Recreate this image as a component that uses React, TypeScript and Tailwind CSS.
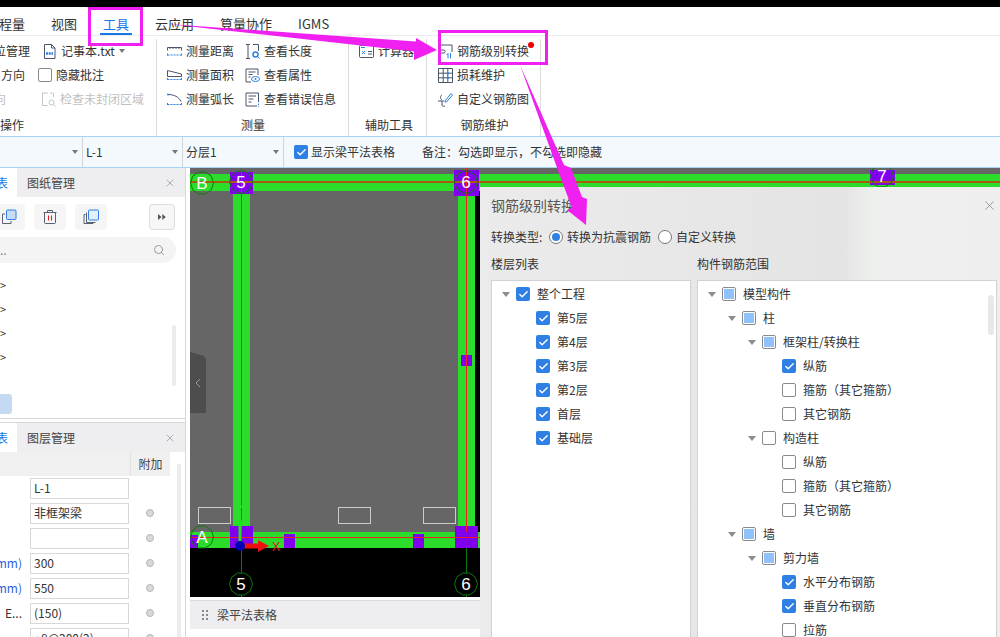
import React from 'react';
import { X, Search, Check } from 'lucide-react';

type CheckState = 'checked' | 'partial' | 'empty';

const Box: React.FC<{ state: CheckState }> = ({ state }) => {
  if (state === 'checked') {
    return (
      <span className="flex h-[14px] w-[14px] shrink-0 items-center justify-center rounded-[2px] bg-[#2f80e4]">
        <Check className="h-[11px] w-[11px] text-white" strokeWidth={3} />
      </span>
    );
  }
  if (state === 'partial') {
    return (
      <span className="flex h-[14px] w-[14px] shrink-0 items-center justify-center rounded-[2px] border border-[#8a8a8a] bg-white">
        <span className="h-[10px] w-[10px] bg-[#8fc1fb]" />
      </span>
    );
  }
  return <span className="h-[14px] w-[14px] shrink-0 rounded-[2px] border border-[#8a8a8a] bg-white" />;
};

type TreeItem = { label: string; level: 0 | 1 | 2 | 3; state: CheckState; arrow?: boolean };

const indent = { 0: 'pl-[4px]', 1: 'pl-[24px]', 2: 'pl-[44px]', 3: 'pl-[64px]' };

const TreeRow: React.FC<{ item: TreeItem }> = ({ item }) => (
  <div className={`flex h-6 items-center whitespace-nowrap ${indent[item.level]}`}>
    <span className="flex w-5 justify-center">
      {item.arrow && <span className="h-0 w-0 border-x-[4px] border-t-[5px] border-x-transparent border-t-[#8c8c8c]" />}
    </span>
    <Box state={item.state} />
    <span className="ml-[7px] text-[12px] leading-6 text-[#333]">{item.label}</span>
  </div>
);

const floors: TreeItem[] = [
  { label: '整个工程', level: 0, state: 'checked', arrow: true },
  { label: '第5层', level: 1, state: 'checked' },
  { label: '第4层', level: 1, state: 'checked' },
  { label: '第3层', level: 1, state: 'checked' },
  { label: '第2层', level: 1, state: 'checked' },
  { label: '首层', level: 1, state: 'checked' },
  { label: '基础层', level: 1, state: 'checked' },
];

const members: TreeItem[] = [
  { label: '模型构件', level: 0, state: 'partial', arrow: true },
  { label: '柱', level: 1, state: 'partial', arrow: true },
  { label: '框架柱/转换柱', level: 2, state: 'partial', arrow: true },
  { label: '纵筋', level: 3, state: 'checked' },
  { label: '箍筋（其它箍筋）', level: 3, state: 'empty' },
  { label: '其它钢筋', level: 3, state: 'empty' },
  { label: '构造柱', level: 2, state: 'empty', arrow: true },
  { label: '纵筋', level: 3, state: 'empty' },
  { label: '箍筋（其它箍筋）', level: 3, state: 'empty' },
  { label: '其它钢筋', level: 3, state: 'empty' },
  { label: '墙', level: 1, state: 'partial', arrow: true },
  { label: '剪力墙', level: 2, state: 'partial', arrow: true },
  { label: '水平分布钢筋', level: 3, state: 'checked' },
  { label: '垂直分布钢筋', level: 3, state: 'checked' },
  { label: '拉筋', level: 3, state: 'empty' },
];

const Ico: React.FC<{ children: React.ReactNode }> = ({ children }) => (
  <svg width="15" height="15" viewBox="0 0 15 15" fill="none" stroke="#4a5568" strokeWidth="1" className="shrink-0">
    {children}
  </svg>
);

const Tool: React.FC<{ icon: React.ReactNode; label: string; muted?: boolean }> = ({ icon, label, muted }) => (
  <div className="flex h-6 items-center gap-1 whitespace-nowrap">
    {icon}
    <span className={`text-[12px] leading-6 ${muted ? 'text-[#c0c0c0]' : 'text-[#333]'}`}>{label}</span>
  </div>
);

const icons = {
  txt: (
    <Ico>
      <path d="M2.500 .5h7l3.500 3.500v10.500h-10.500z M9.500 .5v3.500h3.500" />
      <path d="M4 9.500h7" stroke="#2f80e4" strokeWidth="2.500" strokeDasharray="2 .7" />
    </Ico>
  ),
  check: (
    <Ico>
      <path d="M6.500 1H1.500v12.500h5M9 1h2.500M12.500 1v4" stroke="#c4c4c4" />
      <circle cx="10.500" cy="10.500" r="2.500" stroke="#c4c4c4" />
      <path d="M12.500 12.500l2 2" stroke="#c4c4c4" />
    </Ico>
  ),
  dist: (
    <Ico>
      <path d="M.5 3.500h14M.5 3.500v3M14.500 3.500v3" />
      <path d="M3 3.500v1.500M6 3.500v1.500M9 3.500v1.500M12 3.500v1.500" />
      <path d="M.5 11h14M.5 9.500v3M14.500 9.500v3" stroke="#2f80e4" strokeDasharray="2 1" />
    </Ico>
  ),
  area: (
    <Ico>
      <path d="M.5 2.500v6h14v-2.500z" />
      <path d="M.5 11.500h14M.5 10v3M14.500 10v3" stroke="#2f80e4" strokeDasharray="2 1" />
    </Ico>
  ),
  arc: (
    <Ico>
      <path d="M1 2.500c6 0 11 2.500 13 7" />
      <circle cx="1" cy="2.500" r="1" fill="#2f80e4" stroke="none" />
      <path d="M.5 12.500h14M.5 11v3M14.500 11v3" stroke="#2f80e4" strokeDasharray="2 1" />
    </Ico>
  ),
  len: (
    <Ico>
      <path d="M5 .5H1M5 14.500H1M3 .5v14M8 .5h5.500v6.500" />
      <circle cx="10.500" cy="10.500" r="2.500" stroke="#2f80e4" strokeWidth="1.500" />
      <path d="M12.500 12.500l2 2" stroke="#2f80e4" />
    </Ico>
  ),
  attr: (
    <Ico>
      <path d="M6 14H1V1h12v6" />
      <path d="M3.500 4h7M3.500 6.500h4M3.500 9h2" />
      <ellipse cx="10.500" cy="11" rx="4" ry="2.500" stroke="#2f80e4" />
      <circle cx="10.500" cy="11" r="1" fill="#2f80e4" stroke="none" />
    </Ico>
  ),
  err: (
    <Ico>
      <path d="M12 14H1V1h12.500v9" />
      <path d="M3.500 4h7.500M3.500 7h5M3.500 10h3" />
      <path d="M13.500 11.500v1.500M13.500 14v.7" stroke="#2f80e4" />
    </Ico>
  ),
  calc: (
    <Ico>
      <rect x=".5" y="1.500" width="14" height="12" rx="1" />
      <path d="M2 3.500h4M3 7l3 3M6 7l-3 3" stroke="#2f80e4" />
      <path d="M9 7.500h4M9 10h4" />
    </Ico>
  ),
  convert: (
    <Ico>
      <path d="M1 11V1h13v7M1 6h5c1.500 0 1.500 3 0 3H1.500" />
      <path d="M10 9.500v5M8.500 11l1.500-1.500M12.500 9v5.500" stroke="#2f80e4" />
    </Ico>
  ),
  loss: (
    <Ico>
      <path d="M.5 .5h14v14H.5zM.5 5.200h14M.5 9.800h14M5.200 .5v14M9.800 .5v14" />
      <circle cx="9.800" cy="5.200" r="1.200" fill="#2f80e4" stroke="none" />
      <circle cx="9.800" cy="9.800" r="1.200" fill="#2f80e4" stroke="none" />
    </Ico>
  ),
  custom: (
    <Ico>
      <path d="M4 3C2 4 2 7 4 8M0 9h6M4 9v4c0 1.500 2 1.500 3 1" />
      <path d="M7 9l6-7.500 1.500 1.500-6 7H7z" stroke="#2f80e4" />
    </Ico>
  ),
};

const GroupLabel: React.FC<{ children: React.ReactNode }> = ({ children }) => (
  <div className="mt-auto pb-[1px] text-center text-[12px] leading-5 text-[#333]">{children}</div>
);

const Ribbon: React.FC = () => (
  <div className="flex h-[101px] border-t border-[#ececec] bg-white pt-[3px]">
    <div className="flex w-[157px] flex-col border-r border-[#dcdcdc]">
      <div className="grid grid-cols-[38px_1fr]">
        <div className="flex h-6 w-[30px] items-center justify-end whitespace-nowrap text-[12px] text-[#333]">位管理</div>
        <div className="pl-1">
          <div className="flex h-6 items-center gap-1 whitespace-nowrap text-[12px] text-[#333]">
            {icons.txt}
            <span>记事本.txt</span>
            <span className="h-0 w-0 border-x-[3px] border-t-[4px] border-x-transparent border-t-[#777]" />
          </div>
        </div>
        <div className="flex h-6 w-[25px] items-center justify-end text-[12px] text-[#333]">方向</div>
        <div className="flex h-6 items-center gap-1 text-[12px] text-[#333]">
          <Box state="empty" />
          <span>隐藏批注</span>
        </div>
        <div className="flex h-6 w-[6px] items-center justify-end overflow-hidden text-[12px] text-[#c0c0c0]">
          <span className="shrink-0">向</span>
        </div>
        <div className="pl-[3px]">
          <Tool icon={icons.check} label="检查未封闭区域" muted />
        </div>
      </div>
      <div className="mt-auto flex w-6 justify-end overflow-hidden pb-[1px] text-[12px] leading-5 text-[#333]">
        <span className="shrink-0">操作</span>
      </div>
    </div>
    <div className="flex w-[192px] flex-col border-r border-[#dcdcdc] pl-[10px]">
      <div className="grid grid-cols-[78px_1fr]">
        <Tool icon={icons.dist} label="测量距离" />
        <Tool icon={icons.len} label="查看长度" />
        <Tool icon={icons.area} label="测量面积" />
        <Tool icon={icons.attr} label="查看属性" />
        <Tool icon={icons.arc} label="测量弧长" />
        <Tool icon={icons.err} label="查看错误信息" />
      </div>
      <GroupLabel>
        <span className="-ml-[9px]">测量</span>
      </GroupLabel>
    </div>
    <div className="flex w-[78px] flex-col border-r border-[#dcdcdc] pl-[10px]">
      <Tool icon={icons.calc} label="计算器" />
      <GroupLabel>
        <span className="-ml-[7px]">辅助工具</span>
      </GroupLabel>
    </div>
    <div className="flex w-[114px] flex-col border-r border-[#dcdcdc] pl-[11px]">
      <Tool icon={icons.convert} label="钢筋级别转换" />
      <Tool icon={icons.loss} label="损耗维护" />
      <Tool icon={icons.custom} label="自定义钢筋图" />
      <GroupLabel>
        <span className="-ml-[9px]">钢筋维护</span>
      </GroupLabel>
    </div>
  </div>
);

const Toolbar: React.FC = () => (
  <div className="flex h-[32px] items-center border-y border-y-[#a9d2f7] bg-[#f3f9fd] text-[12px] text-[#333]">
    {[
      ['', 'w-[83px]'],
      ['L-1', 'w-[100px]'],
      ['分层1', 'w-[101px]'],
    ].map(([label, width], i) => (
      <div key={i} className={`flex h-full items-center justify-between border-r border-[#d4d4d4] pl-[3px] pr-[4px] ${width}`}>
        <span>{label}</span>
        <span className="h-0 w-0 border-x-[3px] border-t-[4px] border-x-transparent border-t-[#777]" />
      </div>
    ))}
    <div className="ml-[10px] flex items-center gap-[3px]">
      <Box state="checked" />
      <span>显示梁平法表格</span>
    </div>
    <span className="ml-[27px]">备注：勾选即显示，不勾选即隐藏</span>
  </div>
);

const PanelTabs: React.FC<{ label: string }> = ({ label }) => (
  <div className="flex h-[29px] shrink-0 items-center bg-[#eeeef0] pr-[9px] text-[12px]">
    <div className="flex h-full w-[17px] items-center justify-end overflow-hidden bg-white text-[#1677e6]">
      <span className="shrink-0 pr-[9px]">表</span>
    </div>
    <span className="ml-[10px] text-[#444]">{label}</span>
    <X className="ml-auto h-[12px] w-[12px] text-[#999]" strokeWidth={1.5} />
  </div>
);

const Tile: React.FC<{ className: string; children: React.ReactNode }> = ({ className, children }) => (
  <div className={`flex h-[26px] items-center justify-center rounded-[4px] bg-[#f5f5f5] ${className}`}>{children}</div>
);

const Stack: React.FC = () => (
  <svg width="16" height="16" viewBox="0 0 16 16" fill="none" stroke="#5a6270">
    <path d="M4 5H1.500v9.500h8.500V12" />
    <rect x="5.500" y="1" width="9.500" height="9.500" rx="1" fill="#c9dcf5" stroke="#2f80e4" />
  </svg>
);

const attrs = [
  { label: '', value: 'L-1', dot: false },
  { label: '', value: '非框架梁', dot: true },
  { label: '', value: '', dot: true },
  { label: 'mm)', value: '300', dot: true, blue: true },
  { label: 'mm)', value: '550', dot: true, blue: true },
  { label: 'E...', value: '(150)', dot: true },
  { label: '', value: '⌀8@200(2)', dot: true },
];

const LeftPanels: React.FC = () => (
  <div className="w-[186px] shrink-0 border-r border-[#d8d8d8] bg-white">
    <div className="flex h-[251px] flex-col border-b border-[#d8d8d8]">
      <PanelTabs label="图纸管理" />
      <div className="mt-[7px] flex items-center">
        <Tile className="-ml-[7px] w-[32px]">
          <Stack />
        </Tile>
        <Tile className="ml-[9px] w-[32px]">
          <svg width="16" height="16" viewBox="0 0 16 16" fill="none" stroke="#5a6270">
            <path d="M1.500 3.500h13M5.500 3.500V1.500h5v2M2.500 3.500v10a1 1 0 0 0 1 1h9a1 1 0 0 0 1-1v-10" />
            <path d="M6.500 6.500v5M9.500 6.500v5" stroke="#e02020" />
          </svg>
        </Tile>
        <Tile className="ml-[9px] w-[32px]">
          <svg width="16" height="16" viewBox="0 0 16 16" fill="none" stroke="#5a6270">
            <path d="M2.500 5.500H1v9h9v-1.500M3.500 3.500v10h9" />
            <rect x="5.500" y="1" width="10" height="10" rx="1" fill="#e3effc" stroke="#2f80e4" />
          </svg>
        </Tile>
        <div className="ml-[42px] flex h-[26px] w-[26px] items-center justify-center rounded-[4px] border border-[#dcdcdc] bg-[#f7f7f7]">
          <svg width="8" height="6" viewBox="0 0 8 6" fill="#555">
            <path d="M0 0l3.500 3L0 6zM4.300 0l3.500 3-3.500 3z" />
          </svg>
        </div>
      </div>
      <div className="mt-[7px] flex h-[26px] w-[176px] items-center justify-between rounded-r-full bg-[#f4f4f4] pr-[11px] text-[12px] text-[#888]">
        <span>..</span>
        <Search className="h-[12px] w-[12px] text-[#999]" />
      </div>
      <div className="relative mt-[10px] flex-1">
        {[0, 1, 2, 3].map((i) => (
          <div key={i} className="flex h-6 items-center text-[11px] text-[#333]">
            &gt;
          </div>
        ))}
        <div className="absolute right-[9px] top-[52px] h-[61px] w-[4px] rounded-full bg-[#ececec]" />
        <div className="mt-[25px] h-[20px] w-[12px] rounded-r-[3px] bg-[#c4daf2]" />
      </div>
    </div>
    <div className="mt-[3px] border-t border-[#d8d8d8]">
      <PanelTabs label="图层管理" />
      <div className="flex h-[24px] w-[170px] items-center justify-end bg-[#f0f0f0] text-[12px] text-[#444]">
        <span className="flex h-full w-[40px] items-center justify-center border-l border-[#e2e2e2]">附加</span>
      </div>
      <div className="relative flex flex-col gap-[5px] pt-[2px]">
        {attrs.map((row, i) => (
          <div key={i} className="flex h-5 items-center text-[12px]">
            <span className={`flex w-[22px] justify-end overflow-hidden whitespace-nowrap ${row.blue ? 'text-[#2a5fe0]' : 'text-[#333]'}`}>
              <span className="shrink-0">{row.label}</span>
            </span>
            <span className="ml-[8px] flex h-[21px] w-[99px] items-center border border-[#d8d8d8] px-[3px] text-[#333]">{row.value}</span>
            {row.dot && <span className="ml-[17px] h-[8px] w-[8px] rounded-full border border-[#b5b5b5] bg-[#d9d9d9]" />}
          </div>
        ))}
        <div className="absolute right-[4px] top-[-12px] h-[190px] w-[4px] bg-[#ececec]" />
      </div>
    </div>
  </div>
);

const Axis: React.FC<{ x: number; y: number; label: string; fill?: string }> = ({ x, y, label, fill = 'none' }) => {
  const pts = Array.from({ length: 10 }, (_, i) => {
    const a = (Math.PI * 2 * i) / 10;
    return `${(x + 11.5 * Math.cos(a)).toFixed(1)},${(y + 11.5 * Math.sin(a)).toFixed(1)}`;
  }).join(' ');
  return (
    <g>
      <polygon points={pts} fill={fill} stroke="#0b7a0b" strokeWidth="1" />
      <text x={x} y={y + 6} textAnchor="middle" fontSize="17" fill="#fff" fontFamily="Liberation Sans, sans-serif">
        {label}
      </text>
    </g>
  );
};

const Cad: React.FC = () => (
  <svg viewBox="190 168 810 429" className="block h-[429px] w-[810px]">
    <rect x="190" y="168" width="810" height="429" fill="#666" />
    <rect x="190" y="548" width="810" height="49" fill="#000" />
    <rect x="475" y="191" width="5" height="357" fill="#000" />
    {/* beams */}
    <rect x="190" y="174" width="810" height="17" fill="#2bdc2b" />
    <rect x="190" y="532" width="290" height="16" fill="#2bdc2b" />
    <rect x="233" y="174" width="17" height="374" fill="#2bdc2b" />
    <rect x="458" y="174" width="17" height="374" fill="#2bdc2b" />
    {/* columns */}
    <rect x="230" y="172" width="23" height="22" fill="#8000ee" />
    <rect x="454" y="170" width="25" height="26" fill="#8000ee" />
    <rect x="870" y="170" width="25" height="15" fill="#8000ee" />
    <rect x="461" y="355" width="11" height="11" fill="#8000ee" />
    <rect x="190" y="535" width="8" height="13" fill="#8000ee" />
    <rect x="230" y="526" width="23" height="22" fill="#8000ee" />
    <rect x="284" y="534" width="11" height="14" fill="#8000ee" />
    <rect x="413" y="534" width="11" height="14" fill="#8000ee" />
    <rect x="455" y="526" width="23" height="22" fill="#8000ee" />
    {/* axis lines */}
    <rect x="190" y="181" width="810" height="2" fill="#a85a10" />
    <rect x="190" y="537" width="290" height="1" fill="#ee2020" />
    <rect x="241" y="168" width="1" height="364" fill="#ee2020" />
    <rect x="466" y="168" width="1" height="364" fill="#ee2020" />
    <rect x="241" y="548" width="1" height="49" fill="#0b7a0b" />
    <rect x="466" y="548" width="1" height="49" fill="#0b7a0b" />
    {/* openings */}
    <rect x="198.500" y="507.500" width="32" height="16" fill="none" stroke="#ccc" />
    <rect x="338.500" y="507.500" width="32" height="16" fill="none" stroke="#ccc" />
    <rect x="423.500" y="507.500" width="32" height="16" fill="none" stroke="#ccc" />
    <Axis x={202} y={183} label="B" />
    <Axis x={241} y={182} label="5" />
    <Axis x={466} y={182} label="6" />
    <Axis x={882} y={176} label="7" />
    <Axis x={202} y={537} label="A" />
    <Axis x={241} y={584} label="5" fill="#000" />
    <Axis x={466} y={584} label="6" fill="#000" />
    {/* ucs */}
    <path d="M238.500 546v-20h-3.500l5-8 5 8h-3.500v20z" fill="#22e022" />
    <text x="240" y="513" textAnchor="middle" fontSize="11" fill="#22e022" fontFamily="Liberation Sans, sans-serif">Y</text>
    <path d="M244 543.500h14v-3.500l11 6-11 6v-3.500h-14z" fill="#ee1010" />
    <text x="276" y="551" textAnchor="middle" fontSize="13" fill="#ee1010" fontFamily="Liberation Sans, sans-serif">X</text>
    <circle cx="240" cy="546" r="5" fill="#0000b4" />
    {/* collapse handle */}
    <path d="M190 352l14 4 2 3v54h-16z" fill="#4d4d4d" />
    <path d="M200 379l-4 4 4 4" fill="none" stroke="#999" />
  </svg>
);

const Dialog: React.FC = () => (
  <div className="absolute bottom-0 left-[480px] right-0 top-[187px] bg-[linear-gradient(90deg,#ebebeb_0%,#e4e4e4_70%,#eef0ee_76%,#eeeeee_100%)] text-[12px] text-[#333]">
    <div className="flex h-[36px] items-center justify-between pl-[11px] pr-[3px]">
      <span className="text-[14px] text-[#555]">钢筋级别转换</span>
      <X className="h-[15px] w-[15px] text-[#888]" strokeWidth={1.25} />
    </div>
    <div className="mt-[4px] flex h-5 items-center pl-[11px]">
      <span className="w-[58px]">转换类型:</span>
      <span className="flex h-[14px] w-[14px] items-center justify-center rounded-full border border-[#777] bg-white">
        <span className="h-[8px] w-[8px] rounded-full bg-[#2f80e4]" />
      </span>
      <span className="ml-[4px]">转换为抗震钢筋</span>
      <span className="ml-[7px] h-[14px] w-[14px] rounded-full border border-[#777] bg-white" />
      <span className="ml-[4px]">自定义转换</span>
    </div>
    <div className="mt-[7px] flex pl-[11px]">
      <div className="w-[206px]">
        <div className="h-[26px] leading-5">楼层列表</div>
        <div className="h-[360px] w-[200px] border border-[#d2d2d2] bg-white pt-px">
          {floors.map((item, i) => (
            <TreeRow key={i} item={item} />
          ))}
        </div>
      </div>
      <div className="w-[300px]">
        <div className="h-[26px] leading-5">构件钢筋范围</div>
        <div className="relative h-[360px] border border-[#d2d2d2] bg-white pt-px">
          {members.map((item, i) => (
            <TreeRow key={i} item={item} />
          ))}
          <div className="absolute right-[2px] top-[14px] h-[40px] w-[6px] rounded-full bg-[#e8e8e8]" />
        </div>
      </div>
    </div>
  </div>
);

const Overlay: React.FC = () => (
  <>
    <div className="absolute left-[88px] top-[7px] h-[39px] w-[55px] border-[3px] border-[#f020f0]" />
    <div className="absolute left-[438px] top-[30px] h-[35px] w-[110px] border-[3px] border-[#f020f0]" />
    <span className="absolute left-[528px] top-[42px] h-[6px] w-[6px] rounded-full bg-[#f00000]" />
    <svg viewBox="0 0 1000 637" className="pointer-events-none absolute inset-0 h-[637px] w-[1000px]">
      <path d="M168 24L416 41.500V38L437 50L414 60V51.500Z" fill="#f020f0" />
      <path d="M520 65L564 165L571 168L582 197L587 199L586 225L567 210L572 208L560 176Z" fill="#f020f0" />
    </svg>
  </>
);

const App: React.FC = () => {
  return (
    <div className="relative h-[637px] w-[1000px] overflow-hidden bg-white font-['Noto_Sans_CJK_SC','Liberation_Sans',sans-serif]">
      <div className="h-[7px] bg-black" />
      <div className="flex h-[28px] items-center gap-[26px] bg-white pt-[6px] text-[13px] text-[#333]">
        <span className="-ml-px">程量</span>
        <span>视图</span>
        <span className="relative flex h-full items-center text-[#1677e6]">
          工具
          <span className="absolute -left-[3px] -right-[3px] bottom-0 h-[2px] bg-[#1677e6]" />
        </span>
        <span>云应用</span>
        <span>算量协作</span>
        <span>IGMS</span>
      </div>
      <Ribbon />
      <Toolbar />
      <div className="flex h-[469px]">
        <LeftPanels />
        <div className="ml-[4px] flex-1">
          <Cad />
          <div className="mt-[3px] flex h-[29px] w-[290px] items-center gap-[9px] border-t border-[#dcdcdc] bg-[#eeeef0] pl-[12px] text-[12px] text-[#444]">
            <span className="grid grid-cols-2 gap-[2px]">
              {[0, 1, 2, 3, 4, 5].map((i) => (
                <span key={i} className="h-[2px] w-[2px] bg-[#888]" />
              ))}
            </span>
            <span>梁平法表格</span>
          </div>
        </div>
      </div>
      <Dialog />
      <Overlay />
    </div>
  );
};

export default App;
